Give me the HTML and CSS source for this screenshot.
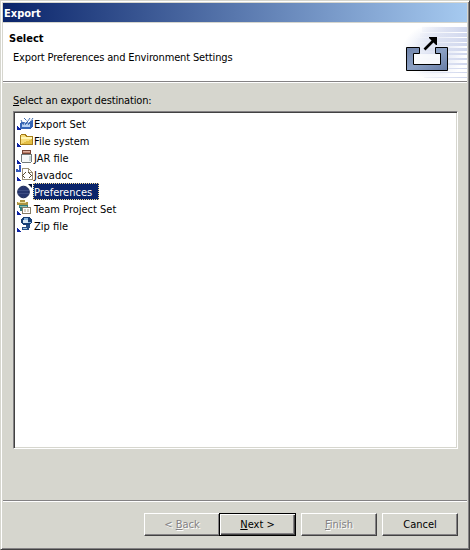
FILE: index.html
```html
<!DOCTYPE html>
<html lang="en">
<head>
<meta charset="utf-8">
<title>Export</title>
<link rel="stylesheet" href="styles.css">
</head>
<body>
<div class="dialog">
  <div class="titlebar"><span>Export</span></div>
  <header class="banner">
    <div class="banner-text">
      <h1>Select</h1>
      <p><span>Export Preferences and Environment Settings</span></p>
    </div>
    <svg class="banner-art" width="75" height="58" viewBox="0 0 75 58">
      <defs>
        <linearGradient id="fade" gradientUnits="userSpaceOnUse" x1="24" y1="0" x2="75" y2="0"><stop offset="0" stop-color="#d5dbef" stop-opacity="0"/><stop offset=".6" stop-color="#d5dbef" stop-opacity=".8"/><stop offset="1" stop-color="#cfd6ed"/></linearGradient>
        <radialGradient id="glow"><stop offset="0" stop-color="#dde2f2"/><stop offset=".6" stop-color="#eef1f9"/><stop offset="1" stop-color="#fff"/></radialGradient>
        <linearGradient id="tray" x2="1" y2="1"><stop offset="0" stop-color="#6e82a8"/><stop offset=".5" stop-color="#8ba0c4"/><stop offset="1" stop-color="#667ba4"/></linearGradient>
      </defs>
      <ellipse cx="42" cy="29" rx="32" ry="28" fill="url(#glow)"/>
      <path fill="url(#fade)" d="M30 4h45v5H30zM28 10h47v4H28zM24 15h51v4H24zM24 20h51v3H24zM24 25h51v3H24zM24 30h51v2H24zM24 35h51v2H24zM24 40h51v2H24zM24 45h51v1H24zM28 49h47v1H28zM32 54h43v1H32z"/>
      <path d="M22 31h26v10H22z" fill="#fff" opacity=".7"/>
      <path d="M14.500 24.500h13v6h-6v11h27v-11h-5v-6h12v23h-41z" fill="url(#tray)" stroke="#000"/>
      <path d="M32.500 26.500 42 17" stroke="#000" stroke-width="2.600"/>
      <path d="M37 14h8v8h-1l-7-7z"/>
    </svg>
  </header>
  <main class="content">
    <label class="prompt"><span><u>S</u>elect an export destination:</span></label>
    <ul class="list">
      <li><svg width="18" height="17" viewBox="0 0 18 17" shape-rendering="crispEdges"><path class="mark" d="M1 12v4h4z"/><path d="M5 8h9l3-2v6l-3 3H4V9z" fill="#3565b7"/><path d="M6 10h8v3H6z" fill="#b9d2f3"/><path d="M7.500 11 5 6M9 11l5-7M12 11l5-7M8 4l3 3" fill="none" stroke="#426dad" shape-rendering="auto"/><path d="M8.500 9.500l4-5M11.500 9.500l4-5" stroke="#edf5ff" shape-rendering="auto"/></svg><span>Export Set</span></li>
      <li><svg width="18" height="17" viewBox="0 0 18 17" shape-rendering="crispEdges"><path class="mark" d="M1 12v4h4z"/><path d="M4.500 13.500v-9l1-1h4l1 2h6v8z" fill="#f6dc79" stroke="#a47b16"/><path d="M5 6h11v2H5z" fill="#fff6b4"/><path d="M5 13h11V8z" fill="#e4bf45"/></svg><span>File system</span></li>
      <li><svg width="18" height="17" viewBox="0 0 18 17" shape-rendering="crispEdges"><path class="mark" d="M1 12v4h4z"/><path d="M5.500 6.500h10v7l-1 1h-8l-1-1z" fill="#f5f7f7" stroke="#737b7c"/><path d="M6.500 2.500h8v3h-8z" fill="#bd816c" stroke="#744334"/><path d="M7 3h7v1H7z" fill="#dfb0a0"/><path d="M13 8h2v5h-2z" fill="#c8d5d6"/></svg><span>JAR file</span></li>
      <li><svg width="18" height="17" viewBox="0 0 18 17" shape-rendering="crispEdges"><path class="mark" d="M1 12v4h4z"/><path d="M4 0v6H1V4" fill="none" stroke="#3156bd" stroke-width="2"/><path d="M6.500 3.500h6l4 4v7h-10z" fill="#fff" stroke="#9b9178"/><path d="M12.500 4v3h3" fill="none" stroke="#9b9178"/><path d="M9.500 7.500l-3 3 3 3M12.500 7.500l3 3-3 3" fill="none" stroke="#554a32"/></svg><span>Javadoc</span></li>
      <li class="selected"><svg width="18" height="17" viewBox="0 0 18 17"><circle cx="7.500" cy="9" r="5.800" fill="#26366f" stroke="#152454"/><path d="M2 7.500h11M2 10.500h11" stroke="#49598d" opacity=".7"/><path d="M12 1h4v4z" fill="#000c32"/></svg><span>Preferences</span></li>
      <li><svg width="18" height="17" viewBox="0 0 18 17" shape-rendering="crispEdges"><path class="mark" d="M1 12v4h4z"/><path d="M1 3h3V1h5v2h3v3H1z" fill="#ac9442"/><path d="M2 3h8v1H2z" fill="#eee19b"/><path d="M3 6h9v6H4z" fill="#347c7c"/><path d="M4 7h7v1H4z" fill="#8cc0b2"/><path d="M6.500 8.500h8v6h-8z" fill="#fff" stroke="#857c66"/><path d="M8 10h2v3H8zM11 10h2v3h-2z" fill="#d7d2c3"/></svg><span>Team Project Set</span></li>
      <li><svg width="18" height="17" viewBox="0 0 18 17" shape-rendering="crispEdges"><path class="mark" d="M1 12v4h4z"/><path d="M7 1h6l3 3v3l-3 2H7L5 7V3z" fill="#153e75"/><path d="M8 2h4v2H8zM12 6h3v1h-3z" fill="#89b6df"/><path d="M7 4h5v3H7z" fill="#d4e6f3"/><path d="M10 9h4v3h-3zM6 11h7v3H6z" fill="#244c83"/><path d="M7 12h4v1H7z" fill="#9dc4df"/></svg><span>Zip file</span></li>
    </ul>
  </main>
  <footer class="actions">
    <button class="back" disabled><span>&lt; <u>B</u>ack</span></button>
    <button class="next"><span><u>N</u>ext &gt;</span></button>
    <button class="finish" disabled><span><u>F</u>inish</span></button>
    <button class="cancel"><span>Cancel</span></button>
  </footer>
</div>
</body>
</html>
```
FILE: styles.css
```css
* { box-sizing: border-box; }
body { margin: 0; font: 11px/17px "DejaVu Sans Condensed", "DejaVu Sans", sans-serif; color: #000; }
u { text-underline-offset: 1px; text-decoration-thickness: 1px; }
.dialog {
  width: 470px; height: 550px; background: #d6d6ce;
  border: 1px solid; border-color: #d6d6ce #424242 #424242 #d6d6ce;
  box-shadow: inset 1px 1px #fff, inset -1px -1px #848284;
  display: flex; flex-direction: column; padding: 2px 2px 1px 2px;
}
.titlebar {
  height: 19px; line-height: 21px; padding-left: 1px; color: #fff;
  font-weight: bold; background: linear-gradient(90deg, #0a246a, #a6caf0);
}
.banner {
  height: 60px; margin-top: 1px; background: #fff; display: flex; justify-content: space-between;
  border-bottom: 1px solid #fff; box-shadow: inset 0 -1px #848284;
}
h1 { font-size: 11px; line-height: 17px; margin: 7px 0 0 6px; }
p { margin: 2px 0 0 10px; letter-spacing: -0.14px; }
.banner-art { display: block; }
.content { padding: 9px 9px 0 10px; }
.prompt { display: block; height: 19px; letter-spacing: -0.16px; }
.list {
  list-style: none; margin: 0; height: 338px; padding: 3px 0 0 2px; background: #fff;
  border: 1px solid; border-color: #848284 #fff #fff #848284;
  box-shadow: inset 1px 1px #424242, inset -1px -1px #d6d6ce;
}
li { display: flex; height: 17px; margin-left: 1px; }
li svg { display: block; flex: none; margin: -1px 1px 0 -1px; }
.selected svg { margin-top: 0; }
li span { margin-left: -1px; line-height: 19px; }
.mark { fill: #0c22a5; }
.selected span { width: 66px; margin-left: -2px; line-height: 17px; background: #0a246a; color: #fff; border: 1px dotted #f5db95; white-space: nowrap; }
.actions {
  margin-top: 51px; height: 48px; border-top: 1px solid #848284; box-shadow: inset 0 1px #fff;
  padding: 12px 9px 0 0; display: flex; justify-content: flex-end;
}
button {
  width: 76px; height: 23px; padding: 0; font: inherit; line-height: 19px; color: #000;
  background: #d6d6ce; border: 1px solid; border-color: #fff #424242 #424242 #fff;
  box-shadow: inset -1px -1px #848284;
}
button:disabled { color: #848284; text-shadow: 1px 1px #fff; }
.next { width: 77px; margin-left: -1px; border-color: #000; box-shadow: inset 1px 1px #fff, inset -1px -1px #424242, inset -2px -2px #848284; }
.finish, .cancel { margin-left: 5px; }
```
